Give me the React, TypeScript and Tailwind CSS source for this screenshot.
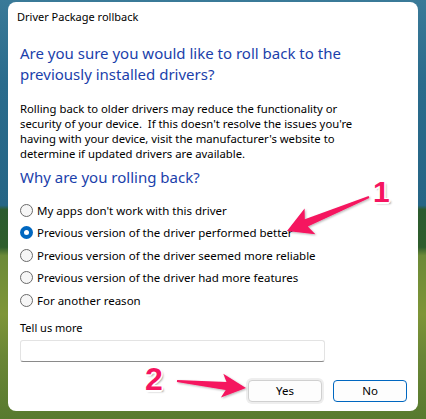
import React from "react";

const font = { fontFamily: '"Noto Sans", "Segoe UI", sans-serif' };

function Radio({ checked }: { checked?: boolean }) {
  if (checked) {
    return (
      <span className="w-[13px] h-[13px] rounded-full bg-[#0067c0] flex items-center justify-center shrink-0">
        <span className="w-[5px] h-[5px] rounded-full bg-white" />
      </span>
    );
  }
  return <span className="w-[13px] h-[13px] rounded-full border border-[#6a6a6a] bg-[#f6f6f6] shrink-0" />;
}

const options = [
  "My apps don't work with this driver",
  "Previous version of the driver performed better",
  "Previous version of the driver seemed more reliable",
  "Previous version of the driver had more features",
  "For another reason",
];

const digitShadow =
  "-1.5px 0 #fff, 1.5px 0 #fff, 0 -1.5px #fff, 0 1.5px #fff, 1px 1px #fff, -1px -1px #fff, 1px -1px #fff, -1px 1px #fff, 2px 2px 2px rgba(0,0,0,0.35)";

export default function App() {
  return (
    <div
      className="w-[426px] h-[419px] relative overflow-hidden pt-[2px] pl-[8px]"
      style={{
        ...font,
        background:
          "linear-gradient(180deg, #3a7a98 0%, #2a6b8c 20%, #256585 49%, #2b5b2f 50%, #2f5d2c 59%, #6c8a38 61%, #7e9538 75%, #6a8636 85%, #587a2f 100%)",
      }}
    >
      <div className="w-[410px] h-[409px] bg-white rounded-[8px] flex flex-col text-black">
        <div className="pl-[9px] pt-[7px] text-[11px] leading-[16px]">Driver Package rollback</div>
        <div className="pl-[12px] pr-[10px] pt-[18px] text-[15px] leading-[21px] text-[#1b3fab]">
          Are you sure you would like to roll back to the
          <br />
          previously installed drivers?
        </div>
        <div className="pl-[12px] pr-[10px] pt-[16px] text-[11.3px] leading-[15px]">
          Rolling back to older drivers may reduce the functionality or
          <br />
          security of your device.&nbsp; If this doesn't resolve the issues you're
          <br />
          having with your device, visit the manufacturer's website to
          <br />
          determine if updated drivers are available.
        </div>
        <div className="pl-[12px] pt-[6px] text-[15px] leading-[21px] text-[#1b3fab]">Why are you rolling back?</div>
        <div className="pl-[12px] pt-[11px] flex flex-col">
          {options.map((o, i) => (
            <div key={o} className="h-[22.5px] flex items-center gap-[4px] text-[11.5px]">
              <Radio checked={i === 1} />
              <span>{o}</span>
            </div>
          ))}
        </div>
        <div className="pl-[12px] pt-[8px] text-[11px] leading-[16px]">Tell us more</div>
        <div className="pl-[12px] pt-[4px]">
          <div className="w-[305px] h-[22px] border border-[#e3e3e3] border-b-[#8a8a8a] rounded-[3px] bg-white" />
        </div>
        <div className="flex justify-end gap-[11px] pr-[11px] pt-[18px]">
          <div className="w-[74px] h-[22px] rounded-[4px] border border-[#d0d0d0] bg-[#fdfdfd] text-[11.5px] flex items-center justify-center shadow-[0_0_0_2px_#eeeeee]">
            Yes
          </div>
          <div className="w-[74px] h-[22px] rounded-[4px] border border-[#0067c0] bg-[#fdfdfd] text-[11.5px] flex items-center justify-center">
            No
          </div>
        </div>
      </div>

      <svg className="absolute left-0 top-0 pointer-events-none" width="426" height="419" viewBox="0 0 426 419">
        <defs>
          <filter id="sh" x="-20%" y="-20%" width="140%" height="140%">
            <feDropShadow dx="1" dy="1" stdDeviation="1" floodColor="#000" floodOpacity="0.3" />
          </filter>
        </defs>
        <polygon
          filter="url(#sh)"
          fill="#f5145f"
          points="287,231 304.6,208.5 304.8,219.2 368.6,196.1 369.4,197.9 307.8,226.6 315.4,234.3"
        />
        <polygon
          filter="url(#sh)"
          fill="#f5145f"
          points="246,388 223.3,373.7 226.5,382 177.1,380 176.9,382 225.7,390 220.9,397.5"
        />
      </svg>
      <div
        className="absolute left-[373px] top-[174px] text-[30px] leading-[36px] font-bold text-[#f5145f]"
        style={{ fontFamily: '"Liberation Sans", Arial, sans-serif', textShadow: digitShadow }}
      >
        1
      </div>
      <div
        className="absolute left-[145px] top-[360px] text-[32px] leading-[38px] font-bold text-[#f5145f]"
        style={{ fontFamily: '"Liberation Sans", Arial, sans-serif', textShadow: digitShadow }}
      >
        2
      </div>
    </div>
  );
}
